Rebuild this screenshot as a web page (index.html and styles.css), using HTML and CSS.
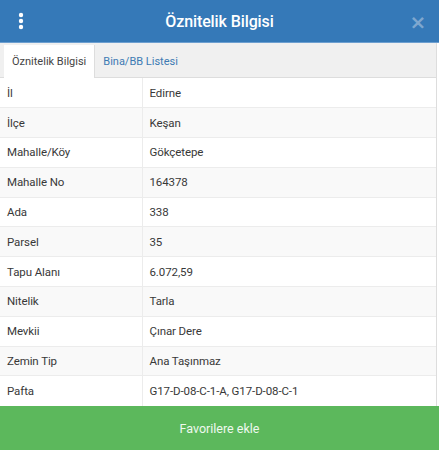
FILE: index.html
```html
<!DOCTYPE html>
<html lang="tr">
<head>
    <meta charset="UTF-8">
    <meta name="viewport" content="width=device-width, initial-scale=1.0">
    <title>Öznitelik Bilgisi</title>
    <link rel="stylesheet" href="styles.css">
</head>
<body>
    <div class="dialog">
        <div class="header">
            <button class="menu-btn" aria-label="Menü">
                <svg width="6" height="18" viewBox="0 0 6 18">
                    <circle cx="3" cy="3" r="2.2" fill="#fff"/>
                    <circle cx="3" cy="9" r="2.2" fill="#fff"/>
                    <circle cx="3" cy="15" r="2.2" fill="#fff"/>
                </svg>
            </button>
            <h1>Öznitelik Bilgisi</h1>
            <button class="close-btn" aria-label="Kapat">×</button>
        </div>

        <div class="tabs">
            <div class="tab active">Öznitelik Bilgisi</div>
            <div class="tab">Bina/BB Listesi</div>
        </div>

        <div class="content">
            <table class="attr-table">
                <tr><td>İl</td><td>Edirne</td></tr>
                <tr><td>İlçe</td><td>Keşan</td></tr>
                <tr><td>Mahalle/Köy</td><td>Gökçetepe</td></tr>
                <tr><td>Mahalle No</td><td>164378</td></tr>
                <tr><td>Ada</td><td>338</td></tr>
                <tr><td>Parsel</td><td>35</td></tr>
                <tr><td>Tapu Alanı</td><td>6.072,59</td></tr>
                <tr><td>Nitelik</td><td>Tarla</td></tr>
                <tr><td>Mevkii</td><td>Çınar Dere</td></tr>
                <tr><td>Zemin Tip</td><td>Ana Taşınmaz</td></tr>
                <tr><td>Pafta</td><td>G17-D-08-C-1-A, G17-D-08-C-1</td></tr>
            </table>
        </div>

        <button class="fav-btn">Favorilere ekle</button>
    </div>
</body>
</html>
```

FILE: styles.css
```css
* {
    box-sizing: border-box;
}
body {
    margin: 0;
    font-family: Roboto, "Liberation Sans", sans-serif;
    background-color: #fff;
}
.dialog {
    width: 439px;
    height: 450px;
    display: flex;
    flex-direction: column;
    overflow: hidden;
}
.header {
    height: 43px;
    background-color: #3579b8;
    display: flex;
    align-items: center;
    border-bottom: 1px solid #6d9fd0;
}
.header h1 {
    flex: 1;
    margin: 0;
    text-align: center;
    color: #fff;
    font-size: 16px;
    font-weight: 500;
    letter-spacing: -0.1px;
}
.menu-btn,
.close-btn {
    background: none;
    border: none;
    padding: 0;
    width: 42px;
    height: 42px;
    display: flex;
    align-items: center;
    justify-content: center;
    cursor: pointer;
}
.close-btn {
    color: #7ea7cf;
    font-size: 20px;
    font-weight: bold;
    font-family: "DejaVu Sans", sans-serif;
    padding-top: 2px;
}
.tabs {
    height: 35px;
    background-color: #f0f0f0;
    display: flex;
    align-items: flex-end;
    padding-left: 4px;
    border-bottom: 1px solid #ddd;
    border-right: 1px solid #ddd;
    margin-right: 2px;
}
.tab {
    height: 32px;
    padding: 0 8px;
    display: flex;
    align-items: center;
    font-size: 11px;
    color: #3d7ab3;
}
.tab.active {
    background-color: #fff;
    color: #444;
    margin-bottom: -1px;
    height: 33px;
    border-right: 1px solid #ddd;
}
.content {
    flex: 1;
    margin-right: 2px;
    border-right: 1px solid #ddd;
}
.attr-table {
    width: 100%;
    border-collapse: collapse;
    font-size: 11.5px;
    letter-spacing: -0.1px;
    color: #383838;
}
.attr-table td {
    height: 29.8px;
    padding: 0 8px;
    border-top: 1px solid #ececec;
}
.attr-table tr:first-child td {
    border-top: none;
}
.attr-table td:first-child {
    width: 142px;
    border-right: 1px solid #ececec;
    padding-left: 7px;
}
.attr-table td:last-child {
    padding-left: 7px;
}
.attr-table tr:nth-child(even) {
    background-color: #f9f9f9;
}
.fav-btn {
    height: 44px;
    background-color: #5cb85c;
    border: none;
    color: #eef8ee;
    font-family: Roboto, "Liberation Sans", sans-serif;
    font-size: 12.5px;
    cursor: pointer;
}
```
